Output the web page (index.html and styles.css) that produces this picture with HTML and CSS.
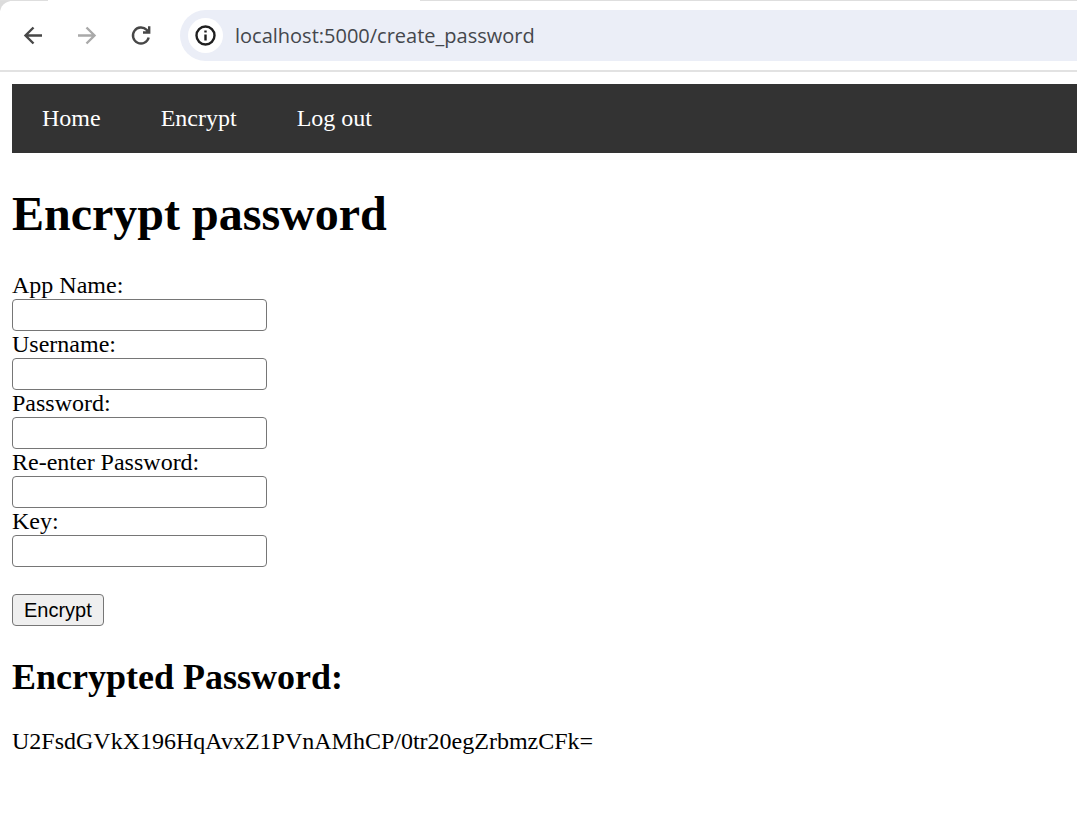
FILE: index.html
```html
<!DOCTYPE html>
<html lang="en">
<head>
<meta charset="utf-8">
<title>Encrypt password</title>
<link rel="stylesheet" href="styles.css">
</head>
<body>
<header class="browser">
  <div class="tab-strip"><span class="tab-edge"></span><span class="tab-rest"></span></div>
  <div class="toolbar">
    <button class="tool" type="button" aria-label="Back">
      <svg width="24" height="24" viewBox="0 0 24 24"><path d="M21 11.500H4.500M12.500 3.500 4.500 11.500l8 8"/></svg>
    </button>
    <button class="tool tool-disabled" type="button" aria-label="Forward" disabled>
      <svg width="24" height="24" viewBox="0 0 24 24"><path d="M3 11.500h16M11.500 3.500 19.500 11.500l-8 8"/></svg>
    </button>
    <button class="tool" type="button" aria-label="Reload">
      <svg width="24" height="24" viewBox="0 0 24 24"><path d="M19.700 13.500A8 8 0 1 1 17.700 5.900L19.500 8M20.200 2.300V8.500H14"/></svg>
    </button>
    <div class="omnibox">
      <button class="site-info" type="button" aria-label="Site information">
        <svg width="22" height="22" viewBox="0 0 22 22"><circle cx="10.500" cy="10.500" r="9"/><path d="M10.500 9.500v6M10.500 5.500v2"/></svg>
      </button>
      <input class="url" type="text" aria-label="Address" value="localhost:5000/create_password">
    </div>
  </div>
</header>
<div class="page">
  <nav class="nav">
    <a href="#">Home</a>
    <a href="#">Encrypt</a>
    <a href="#">Log out</a>
  </nav>
  <main>
    <h1 class="title">Encrypt password</h1>
    <form class="form">
      <label for="app">App Name:</label>
      <input class="field" id="app" type="text">
      <label for="user">Username:</label>
      <input class="field" id="user" type="text">
      <label for="pass">Password:</label>
      <input class="field" id="pass" type="password">
      <label for="again">Re-enter Password:</label>
      <input class="field" id="again" type="password">
      <label for="key">Key:</label>
      <input class="field" id="key" type="text">
      <button class="submit" type="button">Encrypt</button>
    </form>
    <h2 class="subtitle">Encrypted Password:</h2>
    <p class="result">U2FsdGVkX196HqAvxZ1PVnAMhCP/0tr20egZrbmzCFk=</p>
  </main>
</div>
</body>
</html>
```
FILE: styles.css
```css
* {
  box-sizing: border-box;
}

body {
  margin: 0;
  background: #fff;
  color: #000;
  font-family: "Liberation Serif", "Times New Roman", serif;
  font-size: 24px;
  line-height: 27px;
  overflow-x: hidden;
}

.browser {
  background: linear-gradient(135deg, #dcdcdc 8px, #fff 8px);
  border-bottom: 2px solid #e2e2e2;
}

.tab-strip {
  display: flex;
  justify-content: space-between;
  height: 1px;
}

.tab-edge {
  width: 48px;
  background: #dedede;
}

.tab-rest {
  width: 61%;
  background: #dedede;
}

.toolbar {
  display: flex;
  align-items: center;
  padding: 9px 0 9px 18px;
  background: #fff;
  border-top-left-radius: 12px;
}

.tool {
  display: flex;
  align-items: center;
  justify-content: center;
  width: 30px;
  height: 30px;
  margin-right: 24px;
  padding: 0;
  border: 0;
  background: none;
}

.tool svg,
.site-info svg {
  fill: none;
  stroke: #474747;
  stroke-width: 2.4;
}

.tool-disabled svg {
  stroke: #a9a9a9;
}

.omnibox {
  display: flex;
  flex: 1;
  align-items: center;
  gap: 12px;
  height: 51px;
  padding-left: 8px;
  border-radius: 26px 0 0 26px;
  background: #ebeef7;
}

.site-info {
  display: flex;
  align-items: center;
  justify-content: center;
  width: 35px;
  height: 35px;
  padding: 0;
  border: 0;
  border-radius: 50%;
  background: #fff;
}

.site-info svg {
  stroke: #1f1f1f;
}

.url {
  flex: 1;
  min-width: 0;
  padding: 0;
  border: 0;
  outline: 0;
  background: none;
  color: #44474c;
  font-family: "Open Sans", "Segoe UI", sans-serif;
  font-size: 20px;
}

.page {
  padding: 12px 0 12px 12px;
}

.nav {
  display: flex;
  background: #333;
}

.nav a {
  padding: 21px 30px;
  color: #fff;
  text-decoration: none;
}

.title {
  margin: 33px 0 31px;
  font-size: 48px;
  line-height: 55px;
}

.form {
  display: flex;
  flex-direction: column;
  align-items: flex-start;
}

.field {
  width: 255px;
  height: 32px;
  padding: 2px 4px;
  border: 1px solid #767676;
  border-radius: 4px;
  background: #fff;
  font-family: "Liberation Sans", Arial, sans-serif;
  font-size: 20px;
}

.submit {
  height: 32px;
  margin-top: 27px;
  padding: 0 11px;
  border: 1px solid #767676;
  border-radius: 4px;
  background: #efefef;
  color: #000;
  font-family: "Liberation Sans", Arial, sans-serif;
  font-size: 20px;
}

.subtitle {
  margin: 31px 0 30px;
  font-size: 36px;
  line-height: 41px;
}

.result {
  margin: 0;
}
```
